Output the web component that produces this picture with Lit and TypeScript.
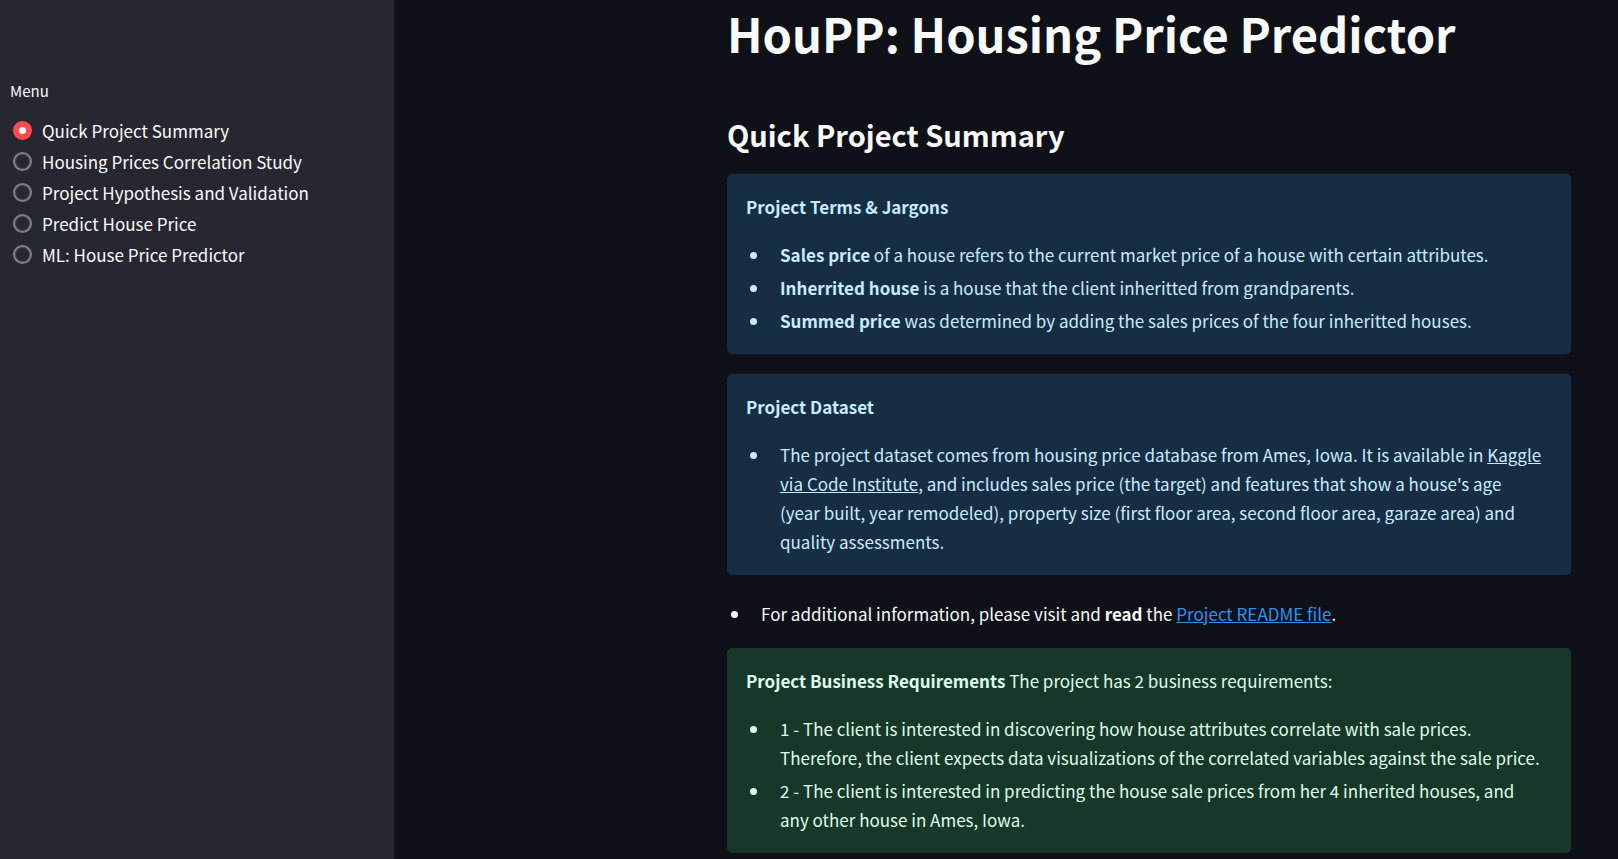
import { LitElement, html, css } from "lit";
import { customElement, property, state } from "lit/decorators.js";

const PAGES = [
  "Quick Project Summary",
  "Housing Prices Correlation Study",
  "Project Hypothesis and Validation",
  "Predict House Price",
  "ML: House Price Predictor",
];

@customElement("side-menu")
export class SideMenu extends LitElement {
  static styles = css`
    :host {
      display: block;
      padding: 79px 10px 0;
      background: #262730;
      color: #fafafa;
    }
    .group {
      margin: 0;
      padding: 0;
      border: 0;
    }
    .title {
      padding: 0;
      margin-bottom: 13px;
      font-size: 15px;
      line-height: 23px;
    }
    .option {
      display: flex;
      align-items: center;
      gap: 10px;
      padding-left: 3px;
      font-size: 17px;
      line-height: 31px;
      cursor: pointer;
    }
    .radio {
      appearance: none;
      box-sizing: border-box;
      flex: none;
      width: 19px;
      height: 19px;
      margin: 0;
      border: 2px solid #7f7f85;
      border-radius: 50%;
      background: #262730;
      box-shadow: inset 0 0 0 1px #44454c;
      cursor: pointer;
    }
    .radio:checked {
      border: 6px solid #ff4b4b;
      background: #fafafa;
      box-shadow: none;
    }
  `;

  @state() private selected = 0;

  render() {
    return html`
      <fieldset class="group">
        <legend class="title">Menu</legend>
        ${PAGES.map(
          (page, i) => html`
            <label class="option">
              <input
                class="radio"
                type="radio"
                name="page"
                .checked=${i === this.selected}
                @change=${() => (this.selected = i)}
              />
              <span>${page}</span>
            </label>
          `,
        )}
      </fieldset>
    `;
  }
}

@customElement("note-box")
export class NoteBox extends LitElement {
  static styles = css`
    :host {
      display: block;
      padding: 18px 19px 19px;
      border-radius: 5px;
      background: #172d43;
      color: #c7ebff;
    }
    :host([kind="success"]) {
      background: #173828;
      color: #dffde9;
    }
  `;

  @property({ reflect: true }) kind = "info";

  render() {
    return html`<slot></slot>`;
  }
}

@customElement("app-root")
export class AppRoot extends LitElement {
  static styles = css`
    :host {
      display: grid;
      grid-template-columns: 394px minmax(0, 1fr);
      min-height: 100vh;
      background: #0e1117;
      color: #fafafa;
      font-family: "Noto Sans CJK SC", "Noto Sans", sans-serif;
      font-size: 17px;
      line-height: 29px;
    }
    .content {
      box-sizing: border-box;
      width: 100%;
      max-width: 891px;
      margin-left: auto;
      padding: 1px 47px 6px 0;
    }
    .heading {
      margin: 0;
      font-size: 47px;
      font-weight: 700;
      line-height: 64px;
    }
    .subheading {
      margin: 48px 0 18px;
      font-size: 29px;
      font-weight: 700;
      line-height: 43px;
    }
    .box + .box {
      margin-top: 20px;
    }
    .lead {
      margin: 0 0 19px;
    }
    .list {
      display: grid;
      gap: 4px;
      margin: 0;
      padding: 0 10px 0 24px;
    }
    .item {
      padding-left: 10px;
    }
    .extra {
      margin: 24px 0 20px;
    }
    .link {
      color: inherit;
    }
    .link.accent {
      color: #2f91f5;
    }
  `;

  render() {
    return html`
      <side-menu></side-menu>
      <main>
        <div class="content">
          <h1 class="heading">HouPP: Housing Price Predictor</h1>
          <h2 class="subheading">Quick Project Summary</h2>
          <note-box class="box">
            <p class="lead"><strong>Project Terms &amp; Jargons</strong></p>
            <ul class="list">
              <li class="item"><strong>Sales price</strong> of a house refers to the current market price of a house with certain attributes.</li>
              <li class="item"><strong>Inherrited house</strong> is a house that the client inheritted from grandparents.</li>
              <li class="item"><strong>Summed price</strong> was determined by adding the sales prices of the four inheritted houses.</li>
            </ul>
          </note-box>
          <note-box class="box">
            <p class="lead"><strong>Project Dataset</strong></p>
            <ul class="list">
              <li class="item">
                The project dataset comes from housing price database from Ames, Iowa. It is available in
                <a class="link" href="#dataset">Kaggle via Code Institute</a>, and includes sales price (the target) and
                features that show a house's age (year built, year remodeled), property size (first floor area, second
                floor area, garaze area) and quality assessments.
              </li>
            </ul>
          </note-box>
          <ul class="list extra">
            <li class="item">
              For additional information, please visit and <strong>read</strong> the
              <a class="link accent" href="#readme">Project README file</a>.
            </li>
          </ul>
          <note-box class="box" kind="success">
            <p class="lead"><strong>Project Business Requirements</strong> The project has 2 business requirements:</p>
            <ul class="list">
              <li class="item">
                1 - The client is interested in discovering how house attributes correlate with sale prices. Therefore,
                the client expects data visualizations of the correlated variables against the sale price.
              </li>
              <li class="item">
                2 - The client is interested in predicting the house sale prices from her 4 inherited houses, and any
                other house in Ames, Iowa.
              </li>
            </ul>
          </note-box>
        </div>
      </main>
    `;
  }
}
